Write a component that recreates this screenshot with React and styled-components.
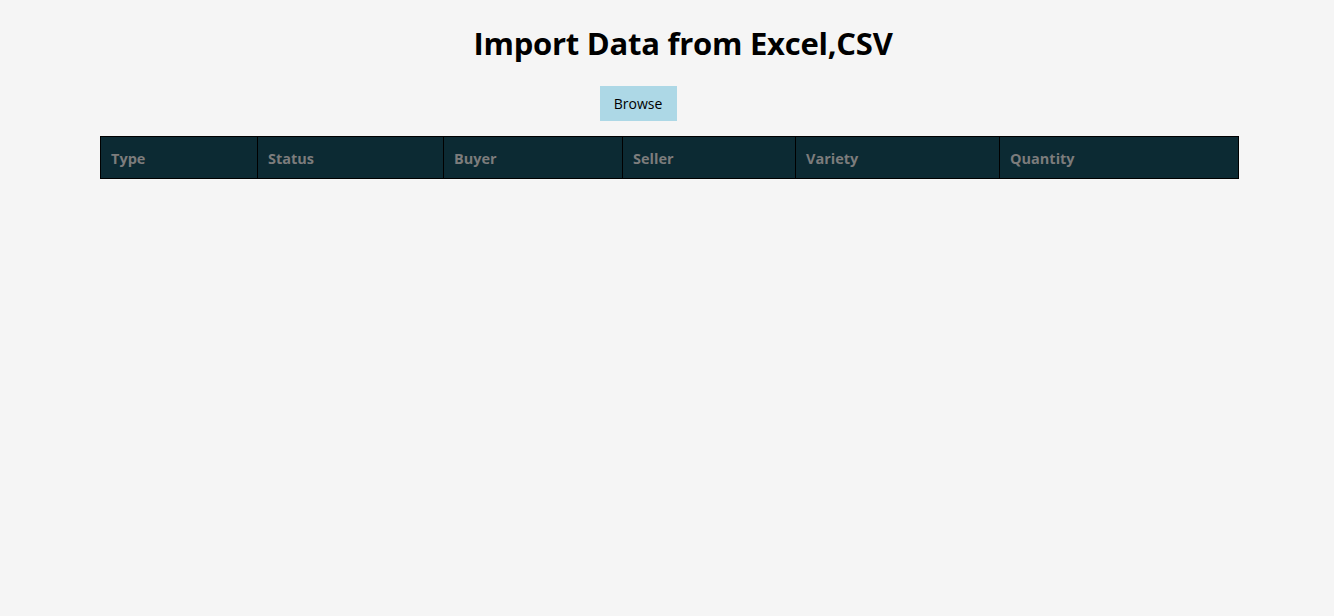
import React from 'react';
import styled, { createGlobalStyle } from 'styled-components';

const GlobalStyle = createGlobalStyle`
  body {
    margin: 0;
    background: #f5f5f5;
    font-family: "Open Sans", "Noto Sans", sans-serif;
  }
`

const Page = styled.div`
  display: flex;
  flex-direction: column;
  align-items: center;
  min-height: 616px;
`

const Title = styled.h1`
  margin: 22px 0 0 32px;
  font-size: 31px;
  font-weight: 700;
  line-height: 42px;
  color: #000;
  letter-spacing: -0.25px;
`

const BrowseButton = styled.label`
  display: flex;
  align-items: center;
  justify-content: center;
  margin: 22px 58px 0 0;
  width: 77px;
  height: 35px;
  background: #add8e6;
  color: #000;
  font-size: 14px;
  cursor: pointer;
`

const Table = styled.table`
  align-self: flex-start;
  margin: 15px 0 0 100px;
  width: 1138px;
  border-collapse: collapse;
  table-layout: fixed;
`

const HeadCell = styled.th`
  width: ${(p) => p.w}px;
  height: 42px;
  padding: 2px 10px 0;
  box-sizing: border-box;
  text-align: left;
  background: #0c2a33;
  border: 1px solid #000;
  color: #7c7c7c;
  font-size: 14.5px;
  font-weight: 700;
`

const columns = [
  { name: 'Type', w: 157 },
  { name: 'Status', w: 186 },
  { name: 'Buyer', w: 179 },
  { name: 'Seller', w: 173 },
  { name: 'Variety', w: 204 },
  { name: 'Quantity', w: 239 },
];

export default function App() {
  return (
    <Page>
      <GlobalStyle />
      <Title>Import Data from Excel,CSV</Title>
      <BrowseButton>
        Browse
        <input type="file" accept=".xlsx,.xls,.csv" hidden />
      </BrowseButton>
      <Table>
        <thead>
          <tr>
            {columns.map((c) => (
              <HeadCell key={c.name} w={c.w}>{c.name}</HeadCell>
            ))}
          </tr>
        </thead>
        <tbody></tbody>
      </Table>
    </Page>
  );
}
